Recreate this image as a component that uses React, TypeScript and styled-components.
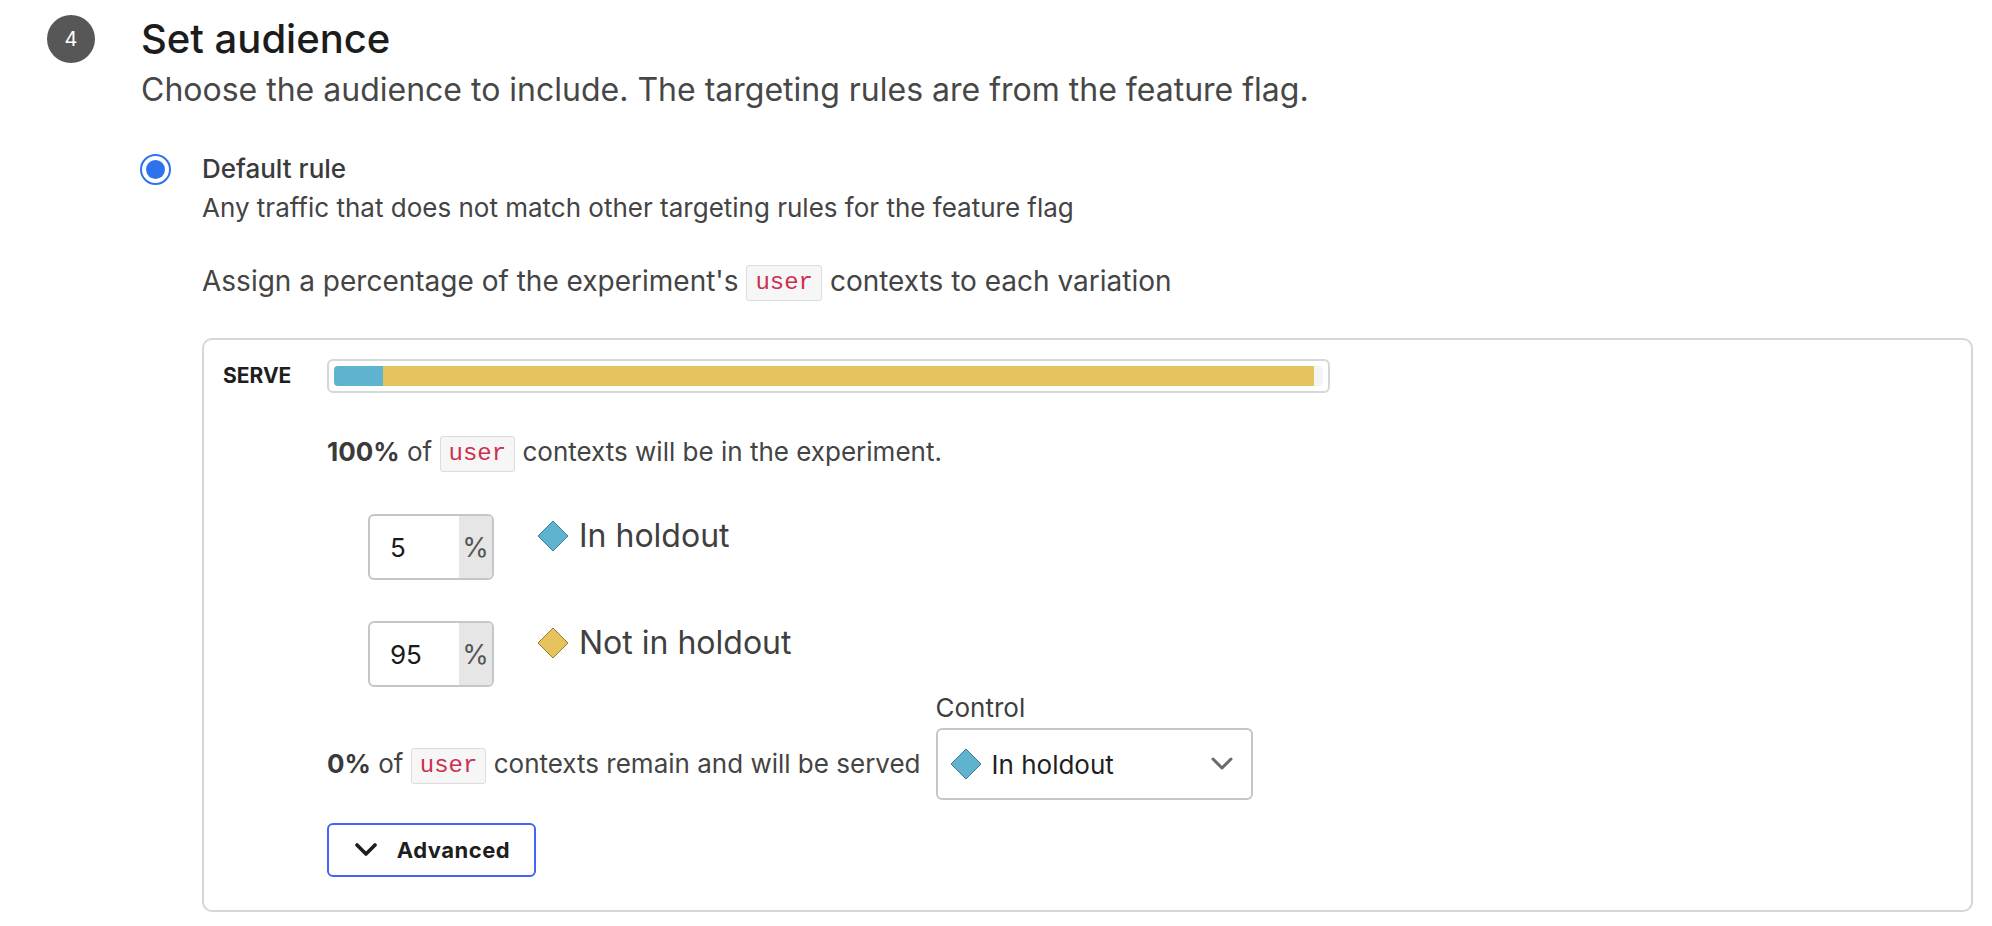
import React from 'react';
import styled, { createGlobalStyle } from 'styled-components';

const GlobalStyle = createGlobalStyle`
  body {
    margin: 0;
    background: #fff;
    font-family: Inter, "Noto Sans", sans-serif;
    color: #3f3f3f;
  }
`;

const Page = styled.div`
  padding: 15px 19px 15px 47px;
`;

const Step = styled.section`
  display: grid;
  grid-template-columns: 48px 1fr;
  column-gap: 46px;
`;

const StepBadge = styled.div`
  width: 48px;
  height: 48px;
  border-radius: 50%;
  background: #575757;
  color: #fff;
  font-size: 20px;
  display: flex;
  align-items: center;
  justify-content: center;
`;

const StepBody = styled.div`
  display: flex;
  flex-direction: column;
`;

const Title = styled.h2`
  margin: 0;
  font-size: 40px;
  font-weight: 500;
  line-height: 48px;
  color: #1c1c1c;
`;

const Subtitle = styled.p`
  margin: 7px 0 0;
  font-size: 32px;
  line-height: 40px;
  color: #474747;
`;

const Option = styled.div`
  margin-top: 41px;
  display: grid;
  grid-template-columns: 30px 1fr;
  column-gap: 31px;
`;

const Radio = styled.span`
  width: 31px;
  height: 31px;
  margin-top: 3px;
  margin-left: -1px;
  box-sizing: border-box;
  border-radius: 50%;
  border: 2px solid #2f72f0;
  display: flex;
  align-items: center;
  justify-content: center;

  &::after {
    content: '';
    width: 19px;
    height: 19px;
    border-radius: 50%;
    background: #2f72f0;
  }
`;

const OptionBody = styled.div`
  display: flex;
  flex-direction: column;
`;

const OptionLabel = styled.div`
  font-size: 26px;
  line-height: 36px;
  font-weight: 500;
  color: #3a3a3a;
`;

const OptionHint = styled.div`
  margin-top: 3px;
  font-size: 26px;
  line-height: 36px;
  color: #444;
`;

const Text = styled.div<{ $top?: number; $size?: number }>`
  margin-top: ${p => p.$top ?? 0}px;
  font-size: ${p => p.$size ?? 26}px;
  line-height: 38px;
  color: #444;
  white-space: nowrap;

  b {
    font-weight: 700;
    color: #3a3a3a;
  }
`;

const Code = styled.code`
  display: inline-block;
  font-family: "Liberation Mono", "DejaVu Sans Mono", monospace;
  font-size: 24px;
  line-height: 34px;
  padding: 0 8px;
  color: #cc2f50;
  background: #f6f6f6;
  border: 1px solid #dcdcdc;
  border-radius: 3px;
  vertical-align: middle;
`;

const Card = styled.div`
  margin-top: 37px;
  border: 2px solid #d6d6d6;
  border-radius: 10px;
  padding: 19px 20px 33px 19px;
  display: grid;
  grid-template-columns: 104px 1fr;
`;

const ServeLabel = styled.div`
  font-size: 21px;
  font-weight: 700;
  color: #1e1e1e;
  line-height: 34px;
`;

const Content = styled.div`
  display: flex;
  flex-direction: column;
  align-items: flex-start;
`;

const Bar = styled.div`
  width: 1003px;
  height: 34px;
  box-sizing: border-box;
  border: 2px solid #d6d6d6;
  border-radius: 6px;
  padding: 5px;
  display: flex;
`;

const Track = styled.div`
  flex: 1;
  display: flex;
  border-radius: 4px;
  overflow: hidden;
  background: #f4f4f6;
`;

const Segment = styled.div<{ $color: string }>`
  background: ${p => p.$color};
`;

const Variations = styled.div`
  margin-top: 42px;
  margin-left: 41px;
  display: flex;
  flex-direction: column;
  gap: 41px;
`;

const VariationRow = styled.div`
  display: flex;
  align-items: flex-start;
  gap: 43px;
`;

const PercentInput = styled.div`
  width: 126px;
  height: 66px;
  box-sizing: border-box;
  border: 2px solid #c6c6c6;
  border-radius: 6px;
  display: flex;
  overflow: hidden;
`;

const PercentValue = styled.div`
  flex: 1;
  padding-left: 20px;
  display: flex;
  align-items: center;
  font-size: 26px;
  color: #1a1a1a;
`;

const PercentAddon = styled.div`
  width: 33px;
  background: #e6e6e6;
  display: flex;
  align-items: center;
  justify-content: center;
  font-size: 27px;
  color: #555;
`;

const VariationName = styled.div`
  display: flex;
  align-items: center;
  gap: 10px;
  font-size: 32px;
  line-height: 40px;
  color: #404040;
  margin-top: 2px;
`;

const Diamond = ({ color, stroke, size = 32 }: { color: string; stroke: string; size?: number }) => (
  <svg width={size} height={size} viewBox="0 0 32 32">
    <path d="M16 1 L31 16 L16 31 L1 16 Z" fill={color} stroke={stroke} strokeWidth="1" strokeLinejoin="round" />
  </svg>
);

const Chevron = ({ color, weight }: { color: string; weight: number }) => (
  <svg width="22" height="14" viewBox="0 0 22 14">
    <path d="M2 2 L11 11 L20 2" fill="none" stroke={color} strokeWidth={weight} strokeLinecap="round" strokeLinejoin="round" />
  </svg>
);

const RemainRow = styled.div`
  margin-top: 5px;
  display: flex;
  align-items: flex-end;
  gap: 15px;
`;

const RemainText = styled(Text)`
  line-height: 72px;
`;

const Field = styled.div`
  display: flex;
  flex-direction: column;
  gap: 4px;
`;

const FieldLabel = styled.div`
  font-size: 26px;
  line-height: 32px;
  color: #3f3f3f;
`;

const Select = styled.div`
  width: 317px;
  height: 72px;
  box-sizing: border-box;
  border: 2px solid #c6c6c6;
  border-radius: 6px;
  padding: 0 18px 0 12px;
  display: flex;
  align-items: center;
  gap: 10px;
  font-size: 26px;
  color: #1f1f1f;
`;

const SelectValue = styled.span`
  flex: 1;
`;

const AdvancedButton = styled.button`
  margin-top: 23px;
  width: 209px;
  height: 54px;
  box-sizing: border-box;
  border: 2px solid #4565f0;
  border-radius: 6px;
  background: #fff;
  display: flex;
  align-items: center;
  justify-content: center;
  gap: 20px;
  padding: 0 0 0 2px;
  font-family: Inter, "Noto Sans", sans-serif;
  font-size: 22px;
  font-weight: 700;
  letter-spacing: 0.5px;
  color: #1e1e1e;
`;

const BLUE = '#5fb3cf';
const YELLOW = '#e6c35c';

const variations = [
  { value: '5', name: 'In holdout', color: BLUE, stroke: '#3a7c93' },
  { value: '95', name: 'Not in holdout', color: YELLOW, stroke: '#98782a' },
];

export default function App() {
  return (
    <Page>
      <GlobalStyle />
      <Step>
        <StepBadge>4</StepBadge>
        <StepBody>
          <Title>Set audience</Title>
          <Subtitle>Choose the audience to include. The targeting rules are from the feature flag.</Subtitle>
          <Option>
            <Radio />
            <OptionBody>
              <OptionLabel>Default rule</OptionLabel>
              <OptionHint>Any traffic that does not match other targeting rules for the feature flag</OptionHint>
              <Text $top={36} $size={28}>
                Assign a percentage of the experiment's <Code>user</Code> contexts to each variation
              </Text>
              <Card>
                <ServeLabel>SERVE</ServeLabel>
                <Content>
                  <Bar>
                    <Track>
                      <Segment $color={BLUE} style={{ width: '5%' }} />
                      <Segment $color={YELLOW} style={{ width: '94.1%' }} />
                    </Track>
                  </Bar>
                  <Text $top={40}>
                    <b>100%</b> of <Code>user</Code> contexts will be in the experiment.
                  </Text>
                  <Variations>
                    {variations.map(v => (
                      <VariationRow key={v.name}>
                        <PercentInput>
                          <PercentValue>{v.value}</PercentValue>
                          <PercentAddon>%</PercentAddon>
                        </PercentInput>
                        <VariationName>
                          <Diamond color={v.color} stroke={v.stroke} />
                          {v.name}
                        </VariationName>
                      </VariationRow>
                    ))}
                  </Variations>
                  <RemainRow>
                    <RemainText>
                      <b>0%</b> of <Code>user</Code> contexts remain and will be served
                    </RemainText>
                    <Field>
                      <FieldLabel>Control</FieldLabel>
                      <Select>
                        <Diamond color={BLUE} stroke="#3a7c93" />
                        <SelectValue>In holdout</SelectValue>
                        <Chevron color="#6a6a6a" weight={3} />
                      </Select>
                    </Field>
                  </RemainRow>
                  <AdvancedButton>
                    <Chevron color="#1e1e1e" weight={3.6} />
                    Advanced
                  </AdvancedButton>
                </Content>
              </Card>
            </OptionBody>
          </Option>
        </StepBody>
      </Step>
    </Page>
  );
}
